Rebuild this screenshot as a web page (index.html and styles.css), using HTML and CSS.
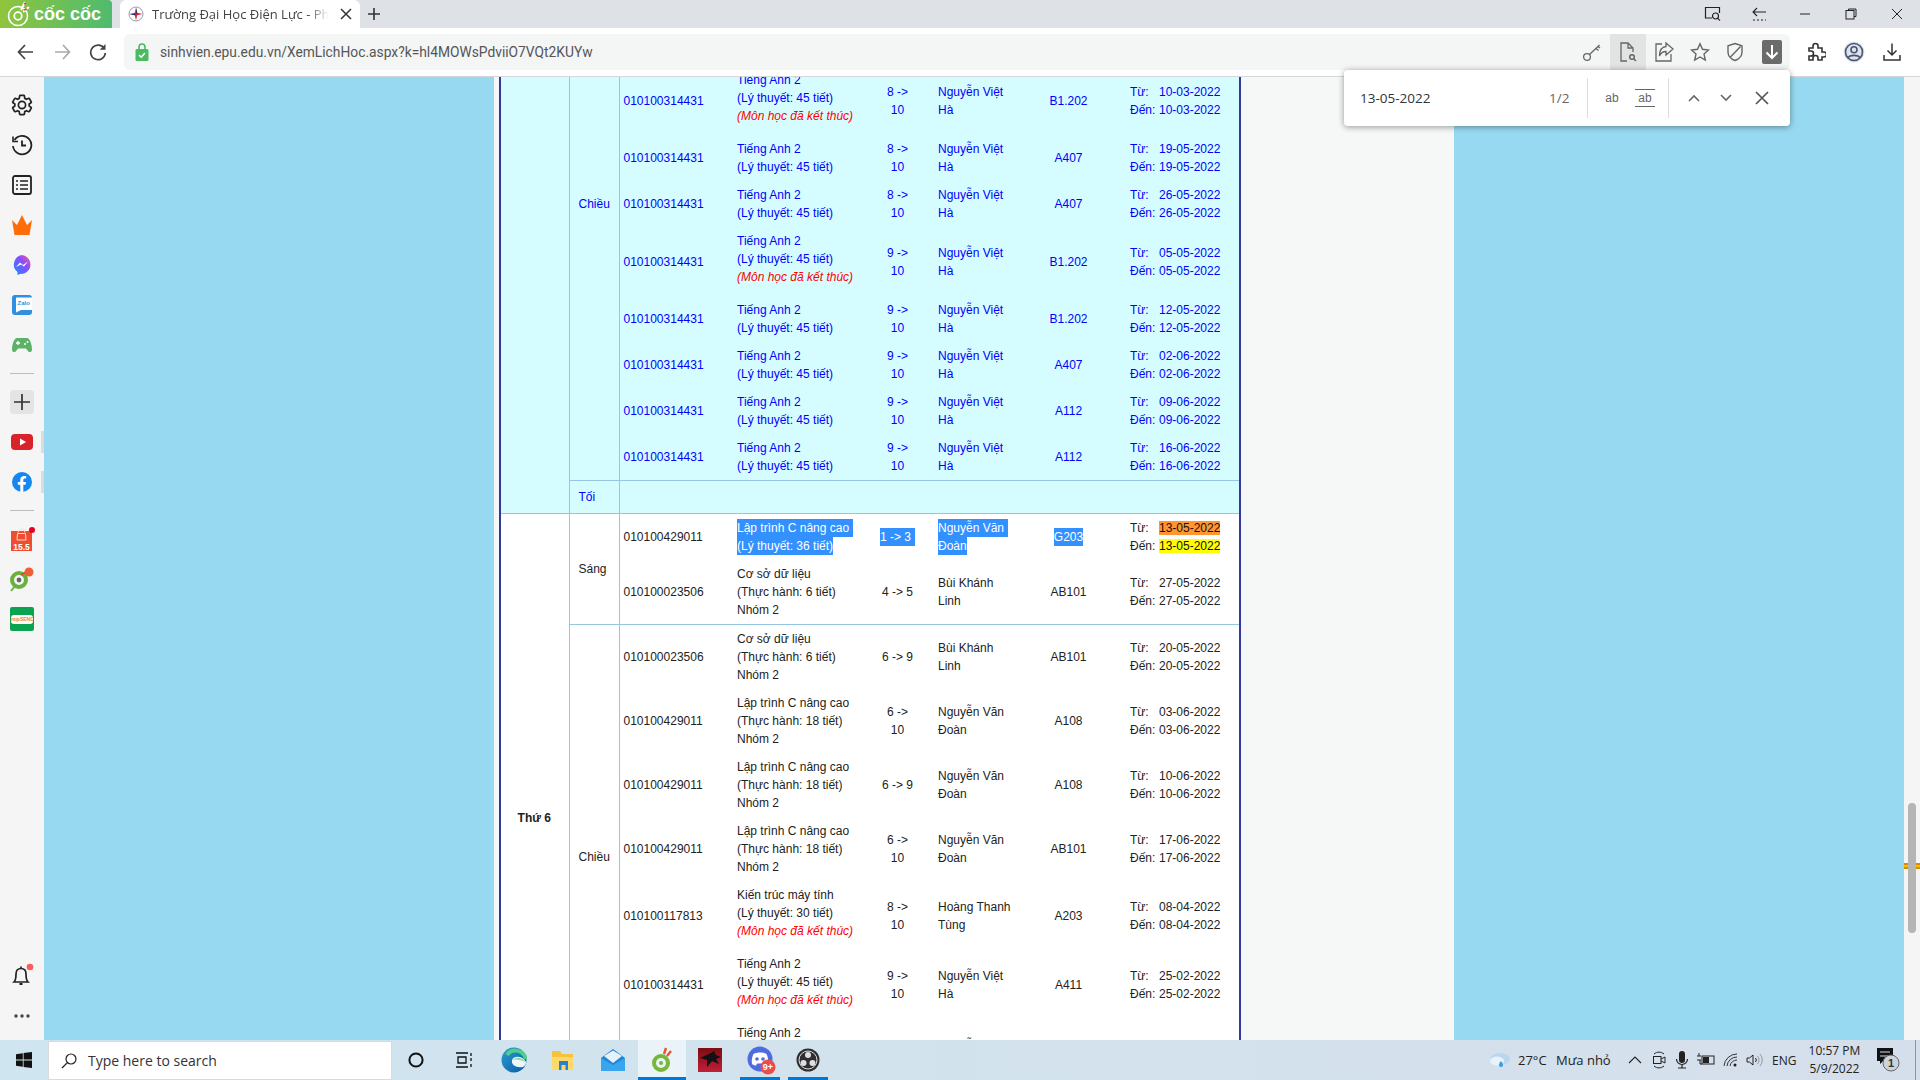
FILE: index.html
```html
<!DOCTYPE html>
<html lang="vi">
  <head>
    <meta charset="UTF-8" />
    <title>Trường Đại Học Điện Lực - Phòng Đào Tạo</title>
    <link rel="stylesheet" href="styles.css">
  </head>
  <body>
    <div class="screen">
      <!-- tab strip -->
      <div class="tabstrip">
        <div class="brand">
          <svg width="24" height="26" viewBox="0 0 24 26"><circle cx="11" cy="15" r="9.5" fill="none" stroke="#fff" stroke-width="1.6"/><circle cx="11" cy="15" r="3.8" fill="none" stroke="#fff" stroke-width="1.8"/><path d="M14 9 L18 1 M16 11 L22 6" stroke="#fff" stroke-width="2"/><path d="M17 3 L19 2 M17 9 L20 8" stroke="#e8452c" stroke-width="1.5"/></svg>
          <span>cốc cốc</span>
        </div>
        <div class="tab">
          <svg class="favicon" width="16" height="16" viewBox="0 0 16 16"><circle cx="8" cy="8" r="7" fill="#fff" stroke="#9a9ab5"/><path d="M8 1.5 L9.2 6.8 L14.5 8 L9.2 9.2 L8 14.5 L6.8 9.2 L1.5 8 L6.8 6.8 Z" fill="#d5281f"/><path d="M8 1.5 L9.2 6.8 L8 8 Z M1.5 8 L6.8 9.2 L8 8 Z" fill="#27307f"/></svg>
          <span class="tab-title">Trường Đại Học Điện Lực - Phòng Đào</span>
          <svg width="12" height="12" viewBox="0 0 12 12"><path d="M1 1 L11 11 M11 1 L1 11" stroke="#333" stroke-width="1.5"/></svg>
        </div>
        <svg class="newtab" width="12" height="12" viewBox="0 0 12 12"><path d="M6 0 V12 M0 6 H12" stroke="#333" stroke-width="1.6"/></svg>
        <div class="winbtns">
          <svg width="18" height="16" viewBox="0 0 18 16"><path d="M8 12 H1.5 V1.5 H15.5 V7" fill="none" stroke="#222" stroke-width="1.2"/><circle cx="11.5" cy="10" r="3" fill="none" stroke="#222" stroke-width="1.2"/><path d="M13.6 12.2 L16 14.6" stroke="#222" stroke-width="1.2"/></svg>
          <svg width="16" height="16" viewBox="0 0 16 16"><path d="M6 2 L2 6 L6 10 M2 6 H15" fill="none" stroke="#222" stroke-width="1.1"/><path d="M2 14 H15" stroke="#222" stroke-dasharray="2 2"/></svg>
          <svg width="12" height="12" viewBox="0 0 12 12"><path d="M1 6 H11" stroke="#222"/></svg>
          <svg width="12" height="12" viewBox="0 0 12 12"><path d="M3.5 2.5 V1 H11 V8.5 H9" fill="none" stroke="#222"/><rect x="1" y="2.5" width="8" height="8.5" fill="none" stroke="#222"/></svg>
          <svg width="12" height="12" viewBox="0 0 12 12"><path d="M1 1 L11 11 M11 1 L1 11" stroke="#222"/></svg>
        </div>
      </div>

      <!-- address bar -->
      <div class="toolbar">
        <svg class="nav" width="18" height="16" viewBox="0 0 18 16"><path d="M8 1 L1.5 8 L8 15 M2 8 H16" fill="none" stroke="#444" stroke-width="1.7"/></svg>
        <svg class="nav" width="18" height="16" viewBox="0 0 18 16"><path d="M10 1 L16.5 8 L10 15 M16 8 H2" fill="none" stroke="#aaa" stroke-width="1.7"/></svg>
        <svg class="nav" width="18" height="18" viewBox="0 0 18 18"><path d="M15.5 6 A7.3 7.3 0 1 0 16.3 10" fill="none" stroke="#444" stroke-width="1.7"/><path d="M16.5 1 V6.8 H10.7 Z" fill="#444"/></svg>
        <div class="urlbox">
          <svg width="14" height="20" viewBox="0 0 14 20"><path d="M4 8 V5 A3 3 0 0 1 10 5 V8" fill="none" stroke="#4cb963" stroke-width="1.6"/><rect x="0.5" y="7" width="13" height="12" rx="1.5" fill="#4cb963"/><path d="M4 13 L6.2 15.2 L10 11" fill="none" stroke="#fff" stroke-width="1.5"/></svg>
          <span class="url">sinhvien.epu.edu.vn/XemLichHoc.aspx?k=hl4MOWsPdviiO7VQt2KUYw</span>
          <div class="url-actions">
            <svg width="20" height="20" viewBox="0 0 20 20"><circle cx="5" cy="15" r="3.4" fill="none" stroke="#666" stroke-width="1.3"/><path d="M7.5 12.5 L17.5 3 M14 6.5 L16.5 8.5 M16 4.5 L18 6" fill="none" stroke="#666" stroke-width="1.3"/></svg>
            <span class="url-active"><svg width="20" height="22" viewBox="0 0 20 22"><path d="M9 20 H3 V2 H10 L15 7 V11 M10 2 V7 H15" fill="none" stroke="#666" stroke-width="1.3"/><circle cx="14" cy="16" r="2.3" fill="none" stroke="#666" stroke-width="1.5"/><path d="M15.7 17.8 L18 20" stroke="#666" stroke-width="1.5"/></svg></span>
            <svg width="20" height="22" viewBox="0 0 20 22"><path d="M8 3 H2 V20 H17 V13" fill="none" stroke="#666" stroke-width="1.3"/><path d="M12 2 L19 8 L12 14 V10.5 C8 10.5 6.5 12.5 5.5 15 C5.5 9.5 8 6 12 5.5 Z" fill="none" stroke="#666" stroke-width="1.3"/></svg>
            <svg width="20" height="20" viewBox="0 0 20 20"><path d="M10 1.8 L12.5 7.3 L18.5 8 L14 12 L15.3 18 L10 15 L4.7 18 L6 12 L1.5 8 L7.5 7.3 Z" fill="none" stroke="#666" stroke-width="1.4"/></svg>
            <svg width="18" height="20" viewBox="0 0 18 20"><path d="M9 1.5 L16 3.8 V10 C16 14 13 17 9 18.5 C5 17 2 14 2 10 V3.8 Z M14.5 4.5 L4.5 15" fill="none" stroke="#666" stroke-width="1.4"/></svg>
            <span class="url-dl"><svg width="14" height="16" viewBox="0 0 14 16"><path d="M7 1 V14 M1.5 8.5 L7 14 L12.5 8.5" fill="none" stroke="#fff" stroke-width="2"/></svg></span>
          </div>
        </div>
        <div class="tb-right">
          <svg width="20" height="20" viewBox="0 0 20 20"><path d="M3 6 H7 V4 A2.5 2.5 0 0 1 12 4 V6 H16 V10 H18 A2.5 2.5 0 0 1 18 15 H16 V18 H12 V16 A2.5 2.5 0 0 0 7 16 V18 H3 V14 H5 A2.5 2.5 0 0 0 5 9 H3 Z" fill="none" stroke="#333" stroke-width="1.6"/></svg>
          <svg width="22" height="22" viewBox="0 0 22 22"><circle cx="11" cy="11" r="10.5" fill="#dfe3ee"/><circle cx="11" cy="11" r="8.5" fill="none" stroke="#4a5570" stroke-width="1.6"/><circle cx="11" cy="8.8" r="3" fill="none" stroke="#4a5570" stroke-width="1.6"/><path d="M5 17 C6.5 13.5 15.5 13.5 17 17" fill="none" stroke="#4a5570" stroke-width="1.6"/></svg>
          <svg width="20" height="20" viewBox="0 0 20 20"><path d="M10 1.5 V13 M5.5 8.5 L10 13 L14.5 8.5 M2 13 V18 H18 V13" fill="none" stroke="#333" stroke-width="1.5"/></svg>
        </div>
      </div>

      <div class="main">
        <!-- left rail -->
        <div class="rail">
          <div class="rail-btn"><svg width="24" height="24" viewBox="0 0 24 24"><path d="M19.14 12.94c.04-.3.06-.61.06-.94 0-.32-.02-.64-.07-.94l2.03-1.58c.18-.14.23-.41.12-.61l-1.92-3.32c-.12-.22-.37-.29-.59-.22l-2.39.96c-.5-.38-1.03-.7-1.62-.94l-.36-2.54c-.04-.24-.24-.41-.48-.41h-3.84c-.24 0-.43.17-.47.41l-.36 2.54c-.59.24-1.13.57-1.62.94l-2.39-.96c-.22-.08-.47 0-.59.22L2.74 8.87c-.12.21-.08.47.12.61l2.03 1.58c-.05.3-.09.63-.09.94s.02.64.07.94l-2.03 1.58c-.18.14-.23.41-.12.61l1.92 3.32c.12.22.37.29.59.22l2.39-.96c.5.38 1.03.7 1.62.94l.36 2.54c.05.24.24.41.48.41h3.84c.24 0 .44-.17.47-.41l.36-2.54c.59-.24 1.13-.56 1.62-.94l2.39.96c.22.08.47 0 .59-.22l1.92-3.32c.12-.22.07-.47-.12-.61l-2.01-1.58zM12 15.6c-1.98 0-3.6-1.62-3.6-3.6s1.62-3.6 3.6-3.6 3.6 1.62 3.6 3.6-1.62 3.6-3.6 3.6z" fill="none" stroke="#222" stroke-width="1.7"/></svg></div>
          <div class="rail-btn"><svg width="22" height="22" viewBox="0 0 22 22"><path d="M3.5 6 A9.2 9.2 0 1 1 2 12" fill="none" stroke="#222" stroke-width="1.8"/><path d="M2 2.5 V7.5 H7" fill="none" stroke="#222" stroke-width="1.6"/><path d="M11 6.5 V11.5 H15" fill="none" stroke="#222" stroke-width="1.8"/></svg></div>
          <div class="rail-btn"><svg width="20" height="20" viewBox="0 0 20 20"><rect x="1" y="1" width="18" height="18" rx="2" fill="none" stroke="#222" stroke-width="1.8"/><path d="M4 6 H6 M8 6 H16 M4 10 H6 M8 10 H16 M4 14 H6 M8 14 H16" stroke="#222" stroke-width="1.6"/></svg></div>
          <div class="rail-btn"><svg width="20" height="20" viewBox="0 0 20 20"><path d="M0 5 L5 10 L10 0 L15 10 L20 5 L17.5 20 H2.5 Z" fill="#ff6d0a"/></svg></div>
          <div class="rail-btn"><svg width="20" height="20" viewBox="0 0 20 20"><defs><linearGradient id="msgGrad" x1="0" y1="1" x2="1" y2="0"><stop offset="0" stop-color="#1a8cff"/><stop offset=".6" stop-color="#8a4dff"/><stop offset="1" stop-color="#ff5c87"/></linearGradient></defs><path d="M10 0 A10 9.6 0 0 1 10 19 L8.5 18.8 L5.5 20 V17 A9.6 9.6 0 0 1 10 0 Z" fill="url(#msgGrad)"/><path d="M4 12 L8 7.5 L11 10 L16 6.5 L12 11.5 L9 9.5 Z" fill="#fff"/></svg></div>
          <div class="rail-btn"><svg width="20" height="20" viewBox="0 0 20 20"><rect width="20" height="20" rx="3" fill="#2f8fe0"/><path d="M4 2.5 H20 V15 H9 L4 17.5 Z" fill="#fff"/><text x="5.5" y="10" class="zalo-text">Zalo</text></svg></div>
          <div class="rail-btn"><svg width="20" height="16" viewBox="0 0 20 16"><path d="M5 1 H15 C18 1 20 8 20 12.5 C20 15.5 17 16 15.5 13.5 L14 11.5 H6 L4.5 13.5 C3 16 0 15.5 0 12.5 C0 8 2 1 5 1 Z" fill="#5cb368"/><path d="M4 6 H8 M6 4 V8" stroke="#fff" stroke-width="1.3"/><circle cx="13" cy="7" r="1" fill="#fff"/><circle cx="15.5" cy="5" r="1" fill="#fff"/></svg></div>
          <div class="rail-sep"></div>
          <div class="rail-btn"><span class="rail-plus"><svg width="16" height="16" viewBox="0 0 16 16"><path d="M8 0 V16 M0 8 H16" stroke="#333" stroke-width="1.7"/></svg></span></div>
          <div class="rail-btn"><svg width="22" height="16" viewBox="0 0 22 16"><rect width="22" height="16" rx="4" fill="#d8232a"/><path d="M9 4.5 L15 8 L9 11.5 Z" fill="#fff"/></svg><span class="rail-pin"></span></div>
          <div class="rail-btn"><svg width="20" height="20" viewBox="0 0 20 20"><circle cx="10" cy="10" r="10" fill="#1487f0"/><path d="M8.3 20 V12.8 H5.8 V10 H8.3 V7.8 C8.3 5.2 9.9 3.9 12.1 3.9 L14.2 4 V6.5 H12.8 C11.6 6.5 11.3 7.1 11.3 8 V10 H14 L13.6 12.8 H11.3 V20 Z" fill="#fff"/></svg><span class="rail-pin"></span></div>
          <div class="rail-sep"></div>
          <div class="rail-btn"><svg width="26" height="26" viewBox="0 0 26 26"><path d="M2 5 H23 V25 H2 Z" fill="#ef4d2f"/><path d="M9 6.5 A3.5 3.5 0 0 1 16 6.5 M8.5 7.5 H16.5 L17 14 H8 Z" fill="none" stroke="#ffd9cf" stroke-width="1"/><text x="12.5" y="23.5" class="shopee-text">15.5</text><circle cx="23" cy="4" r="3" fill="#e8001c"/></svg></div>
          <div class="rail-btn"><svg width="26" height="26" viewBox="0 0 26 26"><circle cx="10" cy="14" r="7" fill="none" stroke="#6ab23e" stroke-width="4"/><circle cx="10" cy="14" r="2.4" fill="#666"/><path d="M6 20 L2 25" stroke="#6ab23e" stroke-width="2"/><path d="M12 9 L17 6" stroke="#e8452c" stroke-width="2"/><circle cx="20" cy="6" r="4.5" fill="#ee5f37"/></svg></div>
          <div class="rail-btn"><span class="mipseno"><span>mipSENO</span></span></div>
          <div class="rail-bottom">
            <div class="rail-btn"><svg width="26" height="26" viewBox="0 0 26 26"><path d="M5 19 C7 17 7 14 7 11 C7 7.5 9 5.5 12 5.5 C15 5.5 17 7.5 17 11 C17 14 17 17 19 19 Z M12 3.5 V5.5" fill="none" stroke="#222" stroke-width="1.7"/><path d="M10.5 21 H13.5" stroke="#222" stroke-width="2"/><circle cx="21" cy="4" r="3.3" fill="#ff5a60"/></svg></div>
            <div class="rail-btn"><svg width="16" height="4" viewBox="0 0 16 4"><circle cx="2" cy="2" r="1.7" fill="#444"/><circle cx="8" cy="2" r="1.7" fill="#444"/><circle cx="14" cy="2" r="1.7" fill="#444"/></svg></div>
          </div>
        </div>

        <!-- page area -->
        <div class="bg-left"></div>
        <div class="page">
          <div class="table-frame">
            <table class="schedule">
              <colgroup>
                <col class="c-day"><col class="c-shift"><col class="c-code"><col class="c-subject"><col class="c-period"><col class="c-teacher"><col class="c-room"><col class="c-date">
              </colgroup>
              <tbody class="past">
                <tr class="r-note">
                  <td class="day" rowspan="11"></td>
                  <td class="shift" rowspan="10">Chiều</td>
                  <td>010100314431</td>
                  <td class="subject">Tiếng Anh 2<br>(Lý thuyết: 45 tiết)<br><i class="ended">(Môn học đã kết thúc)</i></td>
                  <td class="period">8 -&gt;<br>10</td><td class="teacher">Nguyễn Việt<br>Hà</td><td class="room">A407</td>
                  <td class="date"><span class="lbl">Từ:</span>17-02-2022<br><span class="lbl">Đến:</span>17-02-2022</td>
                </tr>
                <tr class="r-note">
                  <td>010100314431</td>
                  <td class="subject">Tiếng Anh 2<br>(Lý thuyết: 45 tiết)<br><i class="ended">(Môn học đã kết thúc)</i></td>
                  <td class="period">8 -&gt;<br>10</td><td class="teacher">Nguyễn Việt<br>Hà</td><td class="room">A407</td>
                  <td class="date"><span class="lbl">Từ:</span>24-02-2022<br><span class="lbl">Đến:</span>24-02-2022</td>
                </tr>
                <tr class="r-note">
                  <td>010100314431</td>
                  <td class="subject">Tiếng Anh 2<br>(Lý thuyết: 45 tiết)<br><i class="ended">(Môn học đã kết thúc)</i></td>
                  <td class="period">8 -&gt;<br>10</td><td class="teacher">Nguyễn Việt<br>Hà</td><td class="room">B1.202</td>
                  <td class="date"><span class="lbl">Từ:</span>10-03-2022<br><span class="lbl">Đến:</span>10-03-2022</td>
                </tr>
                <tr>
                  <td>010100314431</td>
                  <td class="subject">Tiếng Anh 2<br>(Lý thuyết: 45 tiết)</td>
                  <td class="period">8 -&gt;<br>10</td><td class="teacher">Nguyễn Việt<br>Hà</td><td class="room">A407</td>
                  <td class="date"><span class="lbl">Từ:</span>19-05-2022<br><span class="lbl">Đến:</span>19-05-2022</td>
                </tr>
                <tr>
                  <td>010100314431</td>
                  <td class="subject">Tiếng Anh 2<br>(Lý thuyết: 45 tiết)</td>
                  <td class="period">8 -&gt;<br>10</td><td class="teacher">Nguyễn Việt<br>Hà</td><td class="room">A407</td>
                  <td class="date"><span class="lbl">Từ:</span>26-05-2022<br><span class="lbl">Đến:</span>26-05-2022</td>
                </tr>
                <tr class="r-note">
                  <td>010100314431</td>
                  <td class="subject">Tiếng Anh 2<br>(Lý thuyết: 45 tiết)<br><i class="ended">(Môn học đã kết thúc)</i></td>
                  <td class="period">9 -&gt;<br>10</td><td class="teacher">Nguyễn Việt<br>Hà</td><td class="room">B1.202</td>
                  <td class="date"><span class="lbl">Từ:</span>05-05-2022<br><span class="lbl">Đến:</span>05-05-2022</td>
                </tr>
                <tr>
                  <td>010100314431</td>
                  <td class="subject">Tiếng Anh 2<br>(Lý thuyết: 45 tiết)</td>
                  <td class="period">9 -&gt;<br>10</td><td class="teacher">Nguyễn Việt<br>Hà</td><td class="room">B1.202</td>
                  <td class="date"><span class="lbl">Từ:</span>12-05-2022<br><span class="lbl">Đến:</span>12-05-2022</td>
                </tr>
                <tr>
                  <td>010100314431</td>
                  <td class="subject">Tiếng Anh 2<br>(Lý thuyết: 45 tiết)</td>
                  <td class="period">9 -&gt;<br>10</td><td class="teacher">Nguyễn Việt<br>Hà</td><td class="room">A407</td>
                  <td class="date"><span class="lbl">Từ:</span>02-06-2022<br><span class="lbl">Đến:</span>02-06-2022</td>
                </tr>
                <tr>
                  <td>010100314431</td>
                  <td class="subject">Tiếng Anh 2<br>(Lý thuyết: 45 tiết)</td>
                  <td class="period">9 -&gt;<br>10</td><td class="teacher">Nguyễn Việt<br>Hà</td><td class="room">A112</td>
                  <td class="date"><span class="lbl">Từ:</span>09-06-2022<br><span class="lbl">Đến:</span>09-06-2022</td>
                </tr>
                <tr>
                  <td>010100314431</td>
                  <td class="subject">Tiếng Anh 2<br>(Lý thuyết: 45 tiết)</td>
                  <td class="period">9 -&gt;<br>10</td><td class="teacher">Nguyễn Việt<br>Hà</td><td class="room">A112</td>
                  <td class="date"><span class="lbl">Từ:</span>16-06-2022<br><span class="lbl">Đến:</span>16-06-2022</td>
                </tr>
                <tr class="r-night">
                  <td class="shift">Tối</td>
                  <td colspan="6"></td>
                </tr>
              </tbody>
              <tbody class="today">
                <tr>
                  <td class="day" rowspan="10"><b>Thứ 6</b></td>
                  <td class="shift" rowspan="2">Sáng</td>
                  <td>010100429011</td>
                  <td class="subject"><span class="sel sel-pad">Lập trình C nâng cao</span><br><span class="sel">(Lý thuyết: 36 tiết)</span></td>
                  <td class="period"><span class="sel sel-pad">1 -&gt; 3</span></td>
                  <td class="teacher"><span class="sel sel-pad">Nguyễn Văn</span><br><span class="sel">Đoàn</span></td>
                  <td class="room"><span class="sel">G203</span></td>
                  <td class="date"><span class="lbl">Từ:</span><mark class="hit-now">13-05-2022</mark><br><span class="lbl">Đến:</span><mark class="hit">13-05-2022</mark></td>
                </tr>
                <tr class="r-three r-end">
                  <td>010100023506</td>
                  <td class="subject">Cơ sở dữ liệu<br>(Thực hành: 6 tiết)<br>Nhóm 2</td>
                  <td class="period">4 -&gt; 5</td><td class="teacher">Bùi Khánh<br>Linh</td><td class="room">AB101</td>
                  <td class="date"><span class="lbl">Từ:</span>27-05-2022<br><span class="lbl">Đến:</span>27-05-2022</td>
                </tr>
                <tr class="r-three">
                  <td class="shift" rowspan="7">Chiều</td>
                  <td>010100023506</td>
                  <td class="subject">Cơ sở dữ liệu<br>(Thực hành: 6 tiết)<br>Nhóm 2</td>
                  <td class="period">6 -&gt; 9</td><td class="teacher">Bùi Khánh<br>Linh</td><td class="room">AB101</td>
                  <td class="date"><span class="lbl">Từ:</span>20-05-2022<br><span class="lbl">Đến:</span>20-05-2022</td>
                </tr>
                <tr class="r-three">
                  <td>010100429011</td>
                  <td class="subject">Lập trình C nâng cao<br>(Thực hành: 18 tiết)<br>Nhóm 2</td>
                  <td class="period">6 -&gt;<br>10</td><td class="teacher">Nguyễn Văn<br>Đoàn</td><td class="room">A108</td>
                  <td class="date"><span class="lbl">Từ:</span>03-06-2022<br><span class="lbl">Đến:</span>03-06-2022</td>
                </tr>
                <tr class="r-three">
                  <td>010100429011</td>
                  <td class="subject">Lập trình C nâng cao<br>(Thực hành: 18 tiết)<br>Nhóm 2</td>
                  <td class="period">6 -&gt; 9</td><td class="teacher">Nguyễn Văn<br>Đoàn</td><td class="room">A108</td>
                  <td class="date"><span class="lbl">Từ:</span>10-06-2022<br><span class="lbl">Đến:</span>10-06-2022</td>
                </tr>
                <tr class="r-three">
                  <td>010100429011</td>
                  <td class="subject">Lập trình C nâng cao<br>(Thực hành: 18 tiết)<br>Nhóm 2</td>
                  <td class="period">6 -&gt;<br>10</td><td class="teacher">Nguyễn Văn<br>Đoàn</td><td class="room">AB101</td>
                  <td class="date"><span class="lbl">Từ:</span>17-06-2022<br><span class="lbl">Đến:</span>17-06-2022</td>
                </tr>
                <tr class="r-note">
                  <td>010100117813</td>
                  <td class="subject">Kiến trúc máy tính<br>(Lý thuyết: 30 tiết)<br><i class="ended">(Môn học đã kết thúc)</i></td>
                  <td class="period">8 -&gt;<br>10</td><td class="teacher">Hoàng Thanh<br>Tùng</td><td class="room">A203</td>
                  <td class="date"><span class="lbl">Từ:</span>08-04-2022<br><span class="lbl">Đến:</span>08-04-2022</td>
                </tr>
                <tr class="r-note">
                  <td>010100314431</td>
                  <td class="subject">Tiếng Anh 2<br>(Lý thuyết: 45 tiết)<br><i class="ended">(Môn học đã kết thúc)</i></td>
                  <td class="period">9 -&gt;<br>10</td><td class="teacher">Nguyễn Việt<br>Hà</td><td class="room">A411</td>
                  <td class="date"><span class="lbl">Từ:</span>25-02-2022<br><span class="lbl">Đến:</span>25-02-2022</td>
                </tr>
                <tr class="r-note">
                  <td>010100314431</td>
                  <td class="subject">Tiếng Anh 2<br>(Lý thuyết: 45 tiết)<br><i class="ended">(Môn học đã kết thúc)</i></td>
                  <td class="period">9 -&gt;<br>10</td><td class="teacher">Nguyễn Việt<br>Hà</td><td class="room">A411</td>
                  <td class="date"><span class="lbl">Từ:</span>04-03-2022<br><span class="lbl">Đến:</span>04-03-2022</td>
                </tr>
                <tr class="r-night">
                  <td class="shift">Tối</td>
                  <td colspan="6"></td>
                </tr>
              </tbody>
            </table>
          </div>
        </div>
        <div class="bg-right"></div>
        <div class="scrollbar">
          <span class="scroll-thumb"></span>
          <span class="find-tick"></span>
        </div>

        <!-- find in page popup -->
        <div class="findbar">
          <span class="find-text">13-05-2022</span>
          <span class="find-count">1/2</span>
          <span class="find-sep"></span>
          <span class="find-opt">ab</span>
          <span class="find-opt find-word">ab</span>
          <span class="find-sep"></span>
          <svg class="find-up" width="14" height="8" viewBox="0 0 14 8"><path d="M2 7 L7 2 L12 7" fill="none" stroke="#666" stroke-width="1.6"/></svg>
          <svg class="find-down" width="14" height="8" viewBox="0 0 14 8"><path d="M2 1 L7 6 L12 1" fill="none" stroke="#666" stroke-width="1.6"/></svg>
          <svg class="find-close" width="14" height="14" viewBox="0 0 14 14"><path d="M1 1 L13 13 M13 1 L1 13" stroke="#555" stroke-width="1.7"/></svg>
        </div>
      </div>

      <!-- windows taskbar -->
      <div class="taskbar">
        <div class="task-start"><svg width="16" height="16" viewBox="0 0 16 16"><path d="M0 2.2 L6.8 1.2 V7.5 H0 Z M7.6 1.1 L16 0 V7.5 H7.6 Z M0 8.4 H6.8 V14.8 L0 13.8 Z M7.6 8.4 H16 V16 L7.6 14.9 Z" fill="#111"/></svg></div>
        <div class="task-search">
          <svg width="16" height="16" viewBox="0 0 16 16"><circle cx="10" cy="6" r="5" fill="none" stroke="#222" stroke-width="1.2"/><path d="M6.4 9.6 L1 15" stroke="#222" stroke-width="1.3"/></svg>
          <span>Type here to search</span>
        </div>
        <div class="task-btn"><svg width="16" height="16" viewBox="0 0 16 16"><circle cx="8" cy="8" r="6.6" fill="none" stroke="#111" stroke-width="2"/></svg></div>
        <div class="task-btn"><svg width="18" height="18" viewBox="0 0 18 18"><path d="M1 2 H13 M1 16 H13 M3 6 H11 V12 H3 Z M16 2 V5 M16 7 V10 M16 13 V16" fill="none" stroke="#111" stroke-width="1.3"/></svg></div>
        <div class="task-btn task-edge"><svg width="26" height="26" viewBox="0 0 26 26"><defs><linearGradient id="edgeGrad" x1="0" y1="0" x2="1" y2="1"><stop offset="0" stop-color="#2a9fd0"/><stop offset="1" stop-color="#0c59a4"/></linearGradient></defs><circle cx="13" cy="13" r="12.5" fill="url(#edgeGrad)"/><path d="M6 8 C10 1 22 2 25 12" fill="none" stroke="#4fd08a" stroke-width="4"/><path d="M25 15 C22 9 13 8 11 13 C10 18 15 21 22 20 C24 19 25 17 25 15 Z" fill="#eef6fb"/><path d="M11 13 C14 10 21 10 25 15 C21 13 15 12 11 13 Z" fill="#7bdc9c"/></svg></div>
        <div class="task-btn task-files"><svg width="24" height="24" viewBox="0 0 24 24"><path d="M1 3 H9 L11 6 H22 V22 H1 Z" fill="#f8c33c"/><rect x="1" y="9" width="21" height="13" fill="#fcd96b"/><rect x="8" y="13" width="9" height="9" fill="#2a7fd0"/><rect x="10.5" y="17" width="4" height="5" fill="#fcd96b"/></svg></div>
        <div class="task-btn task-mail"><svg width="26" height="24" viewBox="0 0 26 24"><path d="M13 1 L25 10 V23 H1 V10 Z" fill="#1f86dc"/><path d="M4 8 L13 2.5 L22 8 L13 15 Z" fill="#e6f1fa"/><path d="M1 10 L13 17 L25 10 V23 H1 Z" fill="#38a5ee"/></svg></div>
        <div class="task-btn is-active task-coccoc"><svg width="22" height="26" viewBox="0 0 22 26"><circle cx="10" cy="16" r="7" fill="none" stroke="#77b83c" stroke-width="4"/><circle cx="10" cy="16" r="2" fill="#77b83c"/><path d="M13 7 L15 1 M16 9 L20 4" stroke="#e8552e" stroke-width="2.4"/></svg></div>
        <div class="task-btn"><svg width="24" height="24" viewBox="0 0 24 24"><defs><linearGradient id="gameGrad" x1="0" y1="0" x2="0" y2="1"><stop offset="0" stop-color="#7d0c12"/><stop offset="1" stop-color="#c0203a"/></linearGradient></defs><rect width="24" height="24" fill="url(#gameGrad)"/><path d="M2 10 C8 7 12 6 16 3 L18 7 L23 9 L18 11 L21 16 L14 13 L9 19 L9 12 Z" fill="#141014"/></svg></div>
        <div class="task-btn is-open task-discord"><svg width="30" height="32" viewBox="0 0 30 32"><circle cx="13" cy="15" r="12.5" fill="#4f6be0"/><path d="M6.5 10 C10 8 16 8 19.5 10 C21 13 21.5 16 21 20 C19.5 21 18 21.5 17 21.5 L16 19.5 H10 L9 21.5 C8 21.5 6.5 21 5 20 C4.5 16 5 13 6.5 10 Z" fill="#fff"/><circle cx="10" cy="15" r="1.8" fill="#4f6be0"/><circle cx="16" cy="15" r="1.8" fill="#4f6be0"/><circle cx="21" cy="23" r="7.5" fill="#ee4b4b"/><text x="21" y="26" class="badge-text">9+</text></svg></div>
        <div class="task-btn is-open"><svg width="24" height="24" viewBox="0 0 24 24"><circle cx="12" cy="12" r="11.5" fill="#302e31"/><circle cx="12" cy="12" r="9" fill="none" stroke="#dfdfdf" stroke-width="1"/><circle cx="12" cy="7" r="3" fill="#dfdfdf"/><circle cx="7.5" cy="15" r="3" fill="#dfdfdf"/><circle cx="16.5" cy="15" r="3" fill="#dfdfdf"/></svg></div>
        <div class="tray">
          <svg class="tray-cloud" width="22" height="16" viewBox="0 0 22 16"><ellipse cx="11" cy="7" rx="10" ry="6" fill="#b8d6ee"/><ellipse cx="8" cy="9" rx="7" ry="4.5" fill="#e8f2fa"/><path d="M12 9 C13.5 11 14 12 14 13 A2 2 0 0 1 10 13 C10 12 10.5 11 12 9 Z" fill="#3a9be0"/></svg>
          <span class="tray-temp">27°C</span>
          <span class="tray-weather">Mưa nhỏ</span>
          <svg class="tray-chev" width="14" height="8" viewBox="0 0 14 8"><path d="M1 7 L7 1 L13 7" fill="none" stroke="#222" stroke-width="1.1"/></svg>
          <svg class="tray-ic ic-meet" width="14" height="18" viewBox="0 0 14 18"><path d="M2 3 C5 0.5 9 0.5 12 3 M2 15 C5 17.5 9 17.5 12 15" fill="none" stroke="#222"/><rect x="1.5" y="5.5" width="7.5" height="7" fill="none" stroke="#222"/><path d="M9 8 L13 6 V12 L9 10" fill="none" stroke="#222"/></svg>
          <svg class="tray-ic ic-mic" width="14" height="18" viewBox="0 0 14 18"><rect x="4" y="0" width="6" height="12" rx="3" fill="#222"/><path d="M1.5 8 A5.5 5.5 0 0 0 12.5 8 M7 14 V17 M3 17 H11" fill="none" stroke="#222" stroke-width="1.2"/></svg>
          <svg class="tray-ic" width="18" height="14" viewBox="0 0 18 14"><path d="M0 3 H4 M0 7 H4" stroke="#222"/><rect x="5" y="3" width="12" height="8" fill="none" stroke="#222"/><rect x="6" y="4" width="6" height="6" fill="#222"/><path d="M2 0 V3 M3 7 V11 H5" fill="none" stroke="#222"/></svg>
          <svg class="tray-ic" width="16" height="14" viewBox="0 0 16 14"><path d="M1 13 A13 13 0 0 1 14 1 M4 13 A10 10 0 0 1 14 4 M7 13 A7 7 0 0 1 14 7" fill="none" stroke="#333"/><circle cx="12" cy="12" r="1.5" fill="#222"/></svg>
          <svg class="tray-ic ic-sound" width="18" height="14" viewBox="0 0 18 14"><path d="M1 5 H3.5 L7 2 V12 L3.5 9 H1 Z" fill="none" stroke="#222"/><path d="M9.5 5 A3 3 0 0 1 9.5 9" fill="none" stroke="#222"/><path d="M11.5 3 A6 6 0 0 1 11.5 11 M14 1 A9 9 0 0 1 14 13" fill="none" stroke="#999"/></svg>
          <span class="tray-lang">ENG</span>
          <div class="tray-clock"><span>10:57 PM</span><span>5/9/2022</span></div>
          <svg class="tray-note" width="26" height="26" viewBox="0 0 26 26"><path d="M1 1 H17 V14 H7 L4 17 V14 H1 Z" fill="#111"/><path d="M4 5 H14 M4 9 H14" stroke="#d5dfeb"/><circle cx="15" cy="16" r="8" fill="#ccd3dc" stroke="#666"/><text x="15" y="20" class="note-text">1</text></svg>
          <span class="tray-edge"></span>
        </div>
      </div>
    </div>
  </body>
</html>
```

FILE: styles.css
```css
* {
  box-sizing: border-box;
}
html,
body {
  margin: 0;
  height: 100%;
  overflow: hidden;
}
body {
  font-family: "Open Sans", "Noto Sans", sans-serif;
  color: #222;
}
.screen {
  display: flex;
  flex-direction: column;
  height: 1080px;
  width: 1920px;
}

/* tab strip */
.tabstrip {
  height: 28px;
  background-color: #dee1e6;
  display: flex;
  align-items: center;
  flex: none;
}
.brand {
  width: 112px;
  height: 28px;
  background: linear-gradient(90deg, #8fc53c, #4fbb6f);
  display: flex;
  align-items: center;
  padding-left: 7px;
  gap: 3px;
  color: #fff;
  font-family: "Liberation Sans", sans-serif;
  font-size: 18px;
  font-weight: 700;
  white-space: nowrap;
  border-top-right-radius: 4px;
}
.tab {
  margin-left: 8px;
  width: 240px;
  height: 28px;
  background-color: #fff;
  border-radius: 6px 6px 0 0;
  display: flex;
  align-items: center;
  padding-left: 8px;
  padding-right: 8px;
}
.favicon {
  flex: none;
}
.tab-title {
  margin-left: 8px;
  width: 184px;
  font-size: 13px;
  font-family: "Open Sans", sans-serif;
  color: #444;
  white-space: nowrap;
  overflow: hidden;
  -webkit-mask-image: linear-gradient(90deg, #000 85%, transparent 96%);
  mask-image: linear-gradient(90deg, #000 85%, transparent 96%);
}
.tab svg:last-child {
  margin-left: 4px;
}
.newtab {
  margin-left: 8px;
}
.winbtns {
  margin-left: auto;
  display: flex;
  align-items: center;
  gap: 0;
}
.winbtns svg {
  width: 46px;
}

/* toolbar */
.toolbar {
  height: 49px;
  flex: none;
  background-color: #fff;
  border-bottom: 1px solid #d5d7da;
  display: flex;
  align-items: center;
}
.nav {
  width: 36px;
  margin-left: 0;
  flex: none;
}
.nav:first-child {
  margin-left: 8px;
}
.urlbox {
  margin-left: 8px;
  width: 1666px;
  height: 36px;
  background-color: #f4f5f5;
  border-radius: 6px;
  display: flex;
  align-items: center;
  padding-left: 11px;
}
.url {
  margin-left: 11px;
  font-family: "Roboto", sans-serif;
  font-size: 13.8px;
  color: #555;
  white-space: nowrap;
}
.url-actions {
  margin-left: auto;
  display: flex;
  align-items: center;
  height: 36px;
  padding-right: 8px;
  gap: 16px;
}
.url-active {
  width: 36px;
  height: 36px;
  background-color: #e2e3e3;
  display: flex;
  align-items: center;
  justify-content: center;
  margin: 0 -8px;
}
.url-dl {
  width: 20px;
  height: 24px;
  margin-left: 2px;
  background-color: #6b6b6b;
  border-radius: 2px;
  display: flex;
  align-items: center;
  justify-content: center;
}
.tb-right {
  margin-left: 16px;
  display: flex;
  align-items: center;
  gap: 17px;
}

/* main */
.main {
  position: relative;
  flex: 1;
  min-height: 0;
  display: flex;
}
.rail {
  width: 44px;
  flex: none;
  background-color: #f5f5f5;
  padding-top: 8px;
  padding-bottom: 4px;
  display: flex;
  flex-direction: column;
}
.rail-btn {
  position: relative;
  height: 40px;
  display: flex;
  align-items: center;
  justify-content: center;
}
.rail-sep {
  height: 1px;
  margin: 8px 10px;
  background-color: #bdbdbd;
}
.rail-plus {
  width: 24px;
  height: 24px;
  background-color: #e4e4e4;
  border-radius: 4px;
  display: flex;
  align-items: center;
  justify-content: center;
}
.rail-pin {
  position: absolute;
  right: 0;
  top: 9px;
  width: 3px;
  height: 22px;
  background-color: #dcdcdc;
}
.rail-bottom {
  margin-top: auto;
}
.zalo-text {
  font-family: "Liberation Sans", sans-serif;
  font-size: 6px;
  font-weight: 700;
  fill: #2f8fe0;
}
.shopee-text {
  font-family: "Liberation Sans", sans-serif;
  font-size: 8.5px;
  font-weight: 700;
  fill: #fff;
  text-anchor: middle;
}
.mipseno {
  width: 24px;
  height: 24px;
  background-color: #0aa34f;
  border-radius: 2px;
  display: flex;
  align-items: center;
  justify-content: center;
}
.mipseno span {
  width: 22px;
  height: 9px;
  background-color: #fff;
  border-radius: 3px;
  color: #e98a2b;
  font-family: "Liberation Sans", sans-serif;
  font-size: 5px;
  font-weight: 700;
  line-height: 9px;
  text-align: center;
  white-space: nowrap;
  overflow: hidden;
}
.bg-left {
  width: 450px;
  flex: none;
  background-color: #97d9f1;
}
.bg-right {
  flex: 1;
  background-color: #97d9f1;
}
.page {
  width: 960px;
  flex: none;
  background-color: #f6f8f8;
  padding-left: 5px;
  overflow: hidden;
}
.table-frame {
  width: 742px;
  margin-top: -149px;
  border-left: 2px solid #2f3a9a;
  border-right: 2px solid #2f3a9a;
  background-color: #fff;
}

/* schedule table */
.schedule {
  width: 738px;
  table-layout: fixed;
  border-collapse: collapse;
  font-family: "Liberation Sans", sans-serif;
  font-size: 12px;
  line-height: 18px;
}
.c-day {
  width: 68px;
}
.c-shift {
  width: 50px;
}
.c-code {
  width: 113px;
}
.c-subject {
  width: 137px;
}
.c-period {
  width: 58px;
}
.c-teacher {
  width: 110px;
}
.c-room {
  width: 64px;
}
.c-date {
  width: 138px;
}
.schedule td {
  padding: 5px 5px 5px 4px;
  height: 46px;
  vertical-align: middle;
  white-space: nowrap;
}
.schedule .day {
  text-align: center;
  border-bottom: 1px solid #97c6e0;
  border-right: 1px solid #97c6e0;
}
.schedule .shift {
  padding-left: 9px;
  border-right: 1px solid #97c6e0;
  border-bottom: 1px solid #97c6e0;
}
.r-note td {
  height: 69px;
}
.r-three td {
  height: 64px;
}
.schedule .r-night td {
  height: 33px;
  border-top: 1px solid #97c6e0;
  border-bottom: 1px solid #97c6e0;
}
.schedule .r-end td {
  border-bottom: 1px solid #97c6e0;
}
.past {
  background-color: #d5fdff;
  color: #0000ff;
}
.today {
  color: #222;
}
.schedule .subject {
  padding-left: 5px;
}
.schedule .r-note .subject {
  padding-bottom: 10px;
}
.ended {
  color: #ff0000;
}
.schedule .period {
  text-align: center;
}
.schedule .teacher {
  padding-left: 11px;
}
.schedule .room {
  text-align: center;
}
.schedule .date {
  padding-left: 29px;
}
.lbl {
  display: inline-block;
  width: 29px;
}
.sel {
  display: inline-block;
  vertical-align: top;
  background-color: #3390ff;
  color: #fff;
}
.sel-pad {
  padding-right: 4px;
}
.hit-now {
  background-color: #ff9632;
  color: #111;
}
.hit {
  background-color: #ffff00;
  color: #111;
}

/* scrollbar */
.scrollbar {
  position: relative;
  width: 16px;
  flex: none;
  background-color: #f5f5f5;
}
.scroll-thumb {
  position: absolute;
  left: 4px;
  top: 726px;
  width: 8px;
  height: 130px;
  background-color: #b5b5b5;
  border-radius: 4px;
}
.find-tick {
  position: absolute;
  left: 0;
  top: 786px;
  width: 16px;
  height: 6px;
  background: repeating-linear-gradient(180deg, #d98c00 0 2px, #f0c400 2px 4px);
  -webkit-mask-image: linear-gradient(90deg, #000 25%, transparent 25% 75%, #000 75%);
  mask-image: linear-gradient(90deg, #000 25%, transparent 25% 75%, #000 75%);
}

/* find bar */
.findbar {
  position: absolute;
  left: 1344px;
  top: -7px;
  width: 446px;
  height: 56px;
  background-color: #fff;
  border-radius: 4px;
  box-shadow: 0 1px 6px rgba(0, 0, 0, 0.4);
  display: flex;
  align-items: center;
  font-size: 13.5px;
  color: #333;
}
.find-text {
  margin-left: 16px;
  width: 189px;
}
.find-count {
  width: 38px;
  color: #666;
}
.find-sep {
  width: 1px;
  height: 40px;
  background-color: #ddd;
}
.find-opt {
  margin-left: 15px;
  width: 18px;
  font-size: 12px;
  font-family: "Liberation Sans", sans-serif;
  color: #666;
  text-align: center;
}
.find-word {
  margin-left: 14px;
  width: 20px;
  border-top: 1px solid #666;
  border-bottom: 1px solid #666;
  line-height: 16px;
  margin-right: 13px;
}
.find-up {
  margin-left: 18px;
}
.find-down {
  margin-left: 18px;
}
.find-close {
  margin-left: 22px;
}

/* taskbar */
.taskbar {
  height: 40px;
  flex: none;
  background: linear-gradient(90deg, #cfe5ef, #d5dfeb);
  display: flex;
  align-items: center;
}
.task-start {
  width: 48px;
  display: flex;
  justify-content: center;
}
.task-search {
  width: 344px;
  height: 39px;
  margin-top: 1px;
  background-color: #fff;
  border: 1px solid #dadada;
  display: flex;
  align-items: center;
  padding-left: 12px;
  gap: 11px;
  font-size: 14px;
  color: #333;
}
.task-btn {
  position: relative;
  width: 48px;
  height: 40px;
  flex: none;
  display: flex;
  align-items: center;
  justify-content: center;
}
.task-edge {
  margin-left: 2px;
}
.task-files {
  margin-left: 1px;
}
.task-mail {
  margin-left: 2px;
}
.task-coccoc {
  margin-left: 1px;
}
.task-discord {
  margin-left: 2px;
}
.task-discord svg {
  margin-left: 4px;
}
.is-active {
  background-color: #e9f3f8;
}
.is-active::after,
.is-open::after {
  content: "";
  position: absolute;
  bottom: 0;
  left: 0;
  right: 0;
  height: 3px;
  background-color: #0078d7;
}
.is-open::after {
  left: 4px;
  right: 4px;
}
.badge-text {
  font-family: "Liberation Sans", sans-serif;
  font-size: 9px;
  font-weight: 700;
  fill: #fff;
  text-anchor: middle;
}
.tray {
  margin-left: auto;
  display: flex;
  align-items: center;
  height: 40px;
  font-size: 13px;
  color: #222;
  width: 433px;
  position: relative;
}
.tray-cloud {
  margin-left: 2px;
}
.tray-temp {
  margin-left: 7px;
  width: 38px;
}
.tray-weather {
  width: 65px;
}
.tray-chev {
  margin-left: 7px;
}
.tray-ic {
  margin-left: 8px;
}
.tray-ic.ic-meet {
  margin-left: 10px;
}
.tray-ic.ic-mic {
  margin-left: 9px;
}
.tray-ic.ic-sound {
  margin-left: 7px;
}
.tray-lang {
  margin-left: 8px;
  font-size: 12px;
}
.tray-clock {
  margin-left: 13px;
  width: 50px;
  display: flex;
  flex-direction: column;
  align-items: center;
  font-size: 12px;
  line-height: 18px;
  white-space: nowrap;
}
.tray-note {
  margin-left: 17px;
}
.note-text {
  font-family: "Liberation Sans", sans-serif;
  font-size: 11px;
  font-weight: 700;
  fill: #333;
  text-anchor: middle;
}
.tray-edge {
  position: absolute;
  right: 4px;
  top: 0;
  width: 1px;
  height: 40px;
  background-color: #8a98a5;
}
```
